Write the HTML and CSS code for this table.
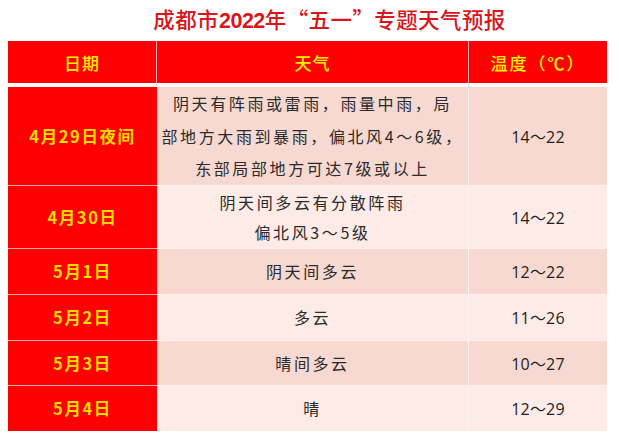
FILE: index.html
```html
<!DOCTYPE html>
<html lang="zh-CN">
<head>
<meta charset="utf-8">
<title>成都市2022年“五一”专题天气预报</title>
<link rel="stylesheet" href="styles.css">
</head>
<body>
<div class="page">
  <h1 class="title">成都市<b>2022</b>年“五一”专题天气预报</h1>
  <table class="forecast">
    <colgroup>
      <col class="c-date">
      <col class="c-weather">
      <col class="c-temp">
    </colgroup>
    <thead>
      <tr>
        <th>日期</th>
        <th>天气</th>
        <th>温度（℃）</th>
      </tr>
    </thead>
    <tbody>
      <tr class="r-dark r1">
        <td class="date">4月29日夜间</td>
        <td class="wx"><div class="lines3">阴天有阵雨或雷雨，雨量中雨，局<br>部地方大雨到暴雨，偏北风4～6级，<br>东部局部地方可达7级或以上</div></td>
        <td class="temp">14～22</td>
      </tr>
      <tr class="r-light r2">
        <td class="date">4月30日</td>
        <td class="wx"><div class="lines2">阴天间多云有分散阵雨<br>偏北风3～5级</div></td>
        <td class="temp">14～22</td>
      </tr>
      <tr class="r-dark r3">
        <td class="date">5月1日</td>
        <td class="wx">阴天间多云</td>
        <td class="temp">12～22</td>
      </tr>
      <tr class="r-light r4">
        <td class="date">5月2日</td>
        <td class="wx">多云</td>
        <td class="temp">11～26</td>
      </tr>
      <tr class="r-dark r5">
        <td class="date">5月3日</td>
        <td class="wx">晴间多云</td>
        <td class="temp">10～27</td>
      </tr>
      <tr class="r-light r6">
        <td class="date">5月4日</td>
        <td class="wx">晴</td>
        <td class="temp">12～29</td>
      </tr>
    </tbody>
  </table>
</div>
</body>
</html>
```

FILE: styles.css
```css
html, body {
  margin: 0;
  padding: 0;
  background: #ffffff;
}

.page {
  width: 619px;
  height: 439px;
  font-family: "Noto Sans CJK SC", "Noto Sans", sans-serif;
}

.title {
  margin: 0;
  padding: 6px 0 0 40px;
  height: 35px;
  box-sizing: border-box;
  text-align: center;
  font-size: 21.5px;
  line-height: 26px;
  font-weight: 500;
  color: #d8161b;
  letter-spacing: 0.4px;
}

.title b {
  font-weight: 700;
  font-family: "Liberation Sans", "Noto Sans", sans-serif;
  letter-spacing: -0.5px;
}

.forecast {
  margin: 6px 0 0 8px;
  width: 599px;
  border-collapse: separate;
  border-spacing: 0;
  table-layout: fixed;
}

.c-date { width: 149px; }
.c-weather { width: 312px; }
.c-temp { width: 138px; }

.forecast th {
  height: 46px;
  padding: 0;
  background: #fe0000;
  color: #ffee00;
  font-size: 17px;
  font-weight: 500;
  letter-spacing: 1px;
  text-align: center;
  vertical-align: middle;
  border-right: 1px solid #f6b2b2;
  border-bottom: 4px solid #ffffff;
  box-sizing: border-box;
}

.forecast th:last-child {
  border-right: 0;
  letter-spacing: 2px;
}

.forecast td {
  padding: 0;
  text-align: center;
  vertical-align: middle;
  border-bottom: 1px solid #fdf1ef;
  border-right: 1px solid #fdf3f1;
  color: #2a2a2a;
  font-size: 16px;
  letter-spacing: 2.6px;
  box-sizing: border-box;
}

.forecast td:last-child { border-right: 0; }

.forecast td.date {
  background: #fe0000;
  color: #ffdc00;
  font-weight: 700;
  font-size: 16.5px;
  letter-spacing: 1.6px;
  border-bottom: 1px solid #f7a8a8;
  border-right: 0;
}

.r-dark td.wx, .r-dark td.temp { background: #f8d9d1; }
.r-light td.wx, .r-light td.temp { background: #fcebe7; }

.forecast td.temp {
  font-family: "Open Sans", "Noto Sans", sans-serif;
  font-size: 16px;
  letter-spacing: 0.2px;
  color: #1e1e1e;
}

.r1 td { height: 98px; }
.r2 td { height: 63px; }
.r3 td { height: 46px; }
.r4 td { height: 46px; }
.r5 td { height: 45px; }
.r6 td { height: 45px; border-bottom: 0; }
.r6 td.date { border-bottom: 0; }

.lines3 {
  line-height: 32.5px;
  white-space: nowrap;
  margin-left: -6px;
  margin-right: -6px;
}

.lines2 {
  line-height: 30px;
  white-space: nowrap;
}
```
